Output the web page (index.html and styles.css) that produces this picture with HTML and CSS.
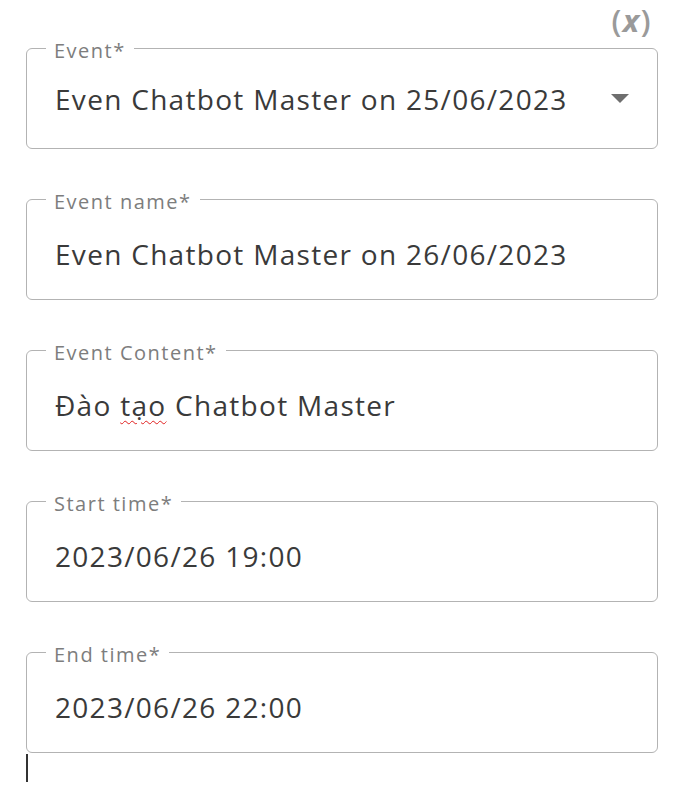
FILE: index.html
```html
<!DOCTYPE html>
<html>
<head>
<meta charset="utf-8">
<link rel="stylesheet" href="styles.css">
</head>
<body>
<div class="page">
  <div class="topbar"><span class="var">(<i class="vx">x</i>)</span></div>
  <div class="fields">
    <div class="field">
      <span class="label">Event*</span>
      <span class="value">Even Chatbot Master on 25/06/2023</span>
      <svg class="caret" width="18" height="10" viewBox="0 0 18 10"><path d="M0 0 L18 0 L9 9 Z" fill="#6e6e6e"/></svg>
    </div>
    <div class="field field-input">
      <span class="label">Event name*</span>
      <span class="value">Even Chatbot Master on 26/06/2023</span>
    </div>
    <div class="field field-input">
      <span class="label">Event Content*</span>
      <span class="value">Đào <span class="spell">tạo</span> Chatbot Master</span>
    </div>
    <div class="field field-input">
      <span class="label">Start time*</span>
      <span class="value">2023/06/26 19:00</span>
    </div>
    <div class="field field-input">
      <span class="label">End time*</span>
      <span class="value">2023/06/26 22:00</span>
    </div>
  </div>
  <div class="cursor"></div>
</div>
</body>
</html>
```

FILE: styles.css
```css
* { box-sizing: border-box; }
html, body { margin: 0; padding: 0; background: #fff; }
body { font-family: "Open Sans", "Noto Sans", sans-serif; }
.page { width: 680px; padding-left: 26px; padding-right: 22px; }
.topbar { height: 48px; display: flex; justify-content: flex-end; align-items: flex-start; }
.var { font-size: 31px; font-weight: 600; color: #9a9a9a; line-height: 40px; margin-right: 7px; letter-spacing: 0.5px; }
.vx { font-style: italic; font-weight: 700; padding: 0 1px; }
.fields { display: flex; flex-direction: column; gap: 50px; }
.field { position: relative; height: 101px; border: 1px solid #b3b3b3; border-radius: 6px; display: flex; align-items: center; padding-left: 28px; padding-right: 28px; }
.field-input { padding-top: 9px; }
.label { position: absolute; left: 19px; top: -8px; padding: 0 8px; background: #fff; font-size: 20px; line-height: 20px; color: #7d7d7d; letter-spacing: 1.5px; }
.value { font-size: 28px; line-height: 36px; color: #3a3a3a; letter-spacing: 1.3px; flex: 1; }
.spell { text-decoration: underline wavy #e02020; text-decoration-thickness: 1px; text-underline-offset: 4px; }
.caret { flex: none; margin-left: 8px; margin-right: 0; }
.cursor { width: 2px; height: 28px; background: #333; margin-top: 1px; }
```
